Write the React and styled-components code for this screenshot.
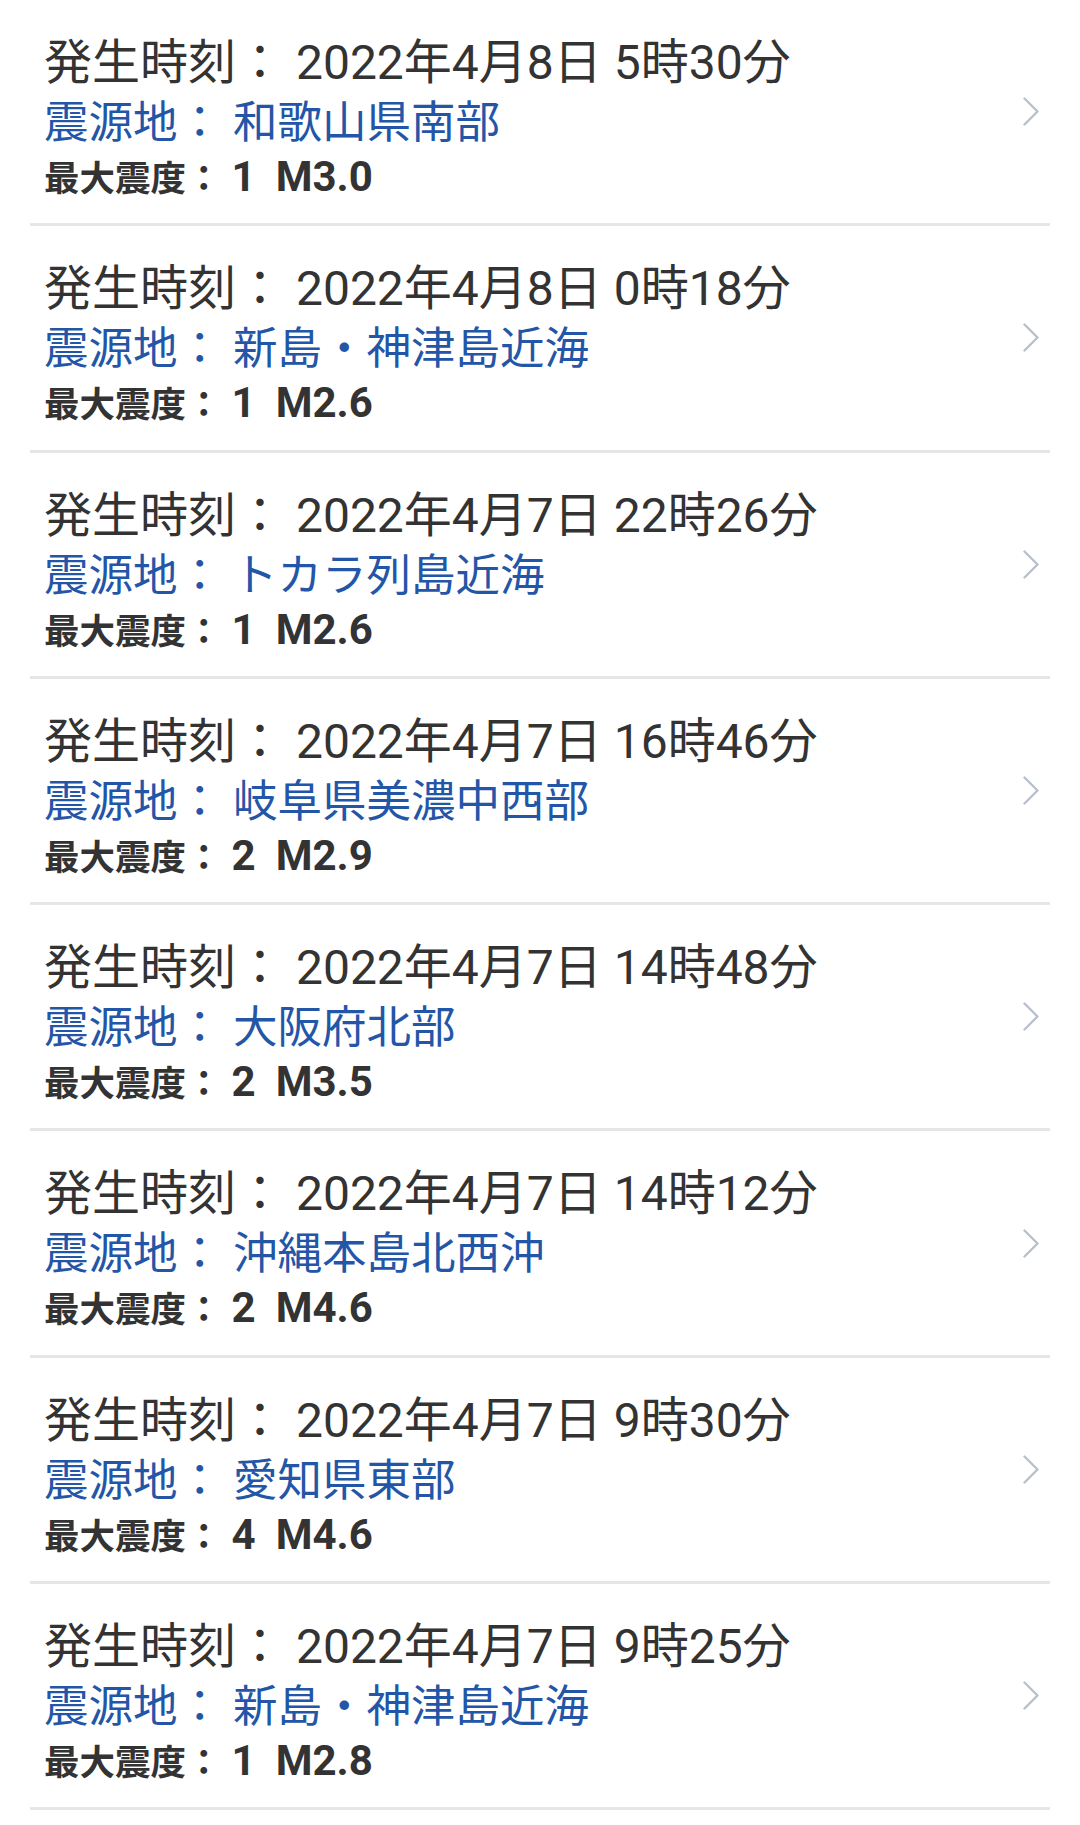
import React from "react";
import styled, { createGlobalStyle } from "styled-components";

const GlobalStyle = createGlobalStyle`
  body {
    margin: 0;
    background: #fff;
    font-family: Roboto, "Noto Sans CJK JP", sans-serif;
  }
`;

const List = styled.ul`
  list-style: none;
  margin: 0;
  padding: 0 30px;
`;

const Row = styled.li`
  display: flex;
  align-items: center;
  padding: 0 11px 0 14px;
  border-bottom: 3px solid #e6e6e6;
  cursor: pointer;
`;

const Info = styled.div`
  flex: 1;
  min-width: 0;
  padding: 32px 0 17.3px;
`;

const Time = styled.div`
  font-size: 48px;
  line-height: 62px;
  color: #333;
  white-space: nowrap;
`;

const Place = styled.div`
  font-size: 44.5px;
  line-height: 58px;
  color: #2456a8;
  white-space: nowrap;
`;

const Scale = styled.div`
  height: 54px;
  font-size: 35.5px;
  line-height: 54px;
  font-weight: bold;
  color: #333;
  white-space: nowrap;
`;

const Num = styled.span`
  font-size: 42px;
  line-height: 1;
  margin-left: ${(p) => p.gap}px;
`;

const Chevron = () => (
  <svg width="16" height="29" viewBox="0 0 16 29" fill="none">
    <polyline
      points="1.5,1.5 14.5,14.5 1.5,27.5"
      stroke="#b8c0cb"
      strokeWidth="2.4"
      strokeLinecap="round"
      strokeLinejoin="round"
    />
  </svg>
);

const quakes = [
  { time: "2022年4月8日 5時30分", place: "和歌山県南部", shindo: "1", mag: "M3.0" },
  { time: "2022年4月8日 0時18分", place: "新島・神津島近海", shindo: "1", mag: "M2.6" },
  { time: "2022年4月7日 22時26分", place: "トカラ列島近海", shindo: "1", mag: "M2.6" },
  { time: "2022年4月7日 16時46分", place: "岐阜県美濃中西部", shindo: "2", mag: "M2.9" },
  { time: "2022年4月7日 14時48分", place: "大阪府北部", shindo: "2", mag: "M3.5" },
  { time: "2022年4月7日 14時12分", place: "沖縄本島北西沖", shindo: "2", mag: "M4.6" },
  { time: "2022年4月7日 9時30分", place: "愛知県東部", shindo: "4", mag: "M4.6" },
  { time: "2022年4月7日 9時25分", place: "新島・神津島近海", shindo: "1", mag: "M2.8" },
];

const App = () => {
  return (
    <>
      <GlobalStyle />
      <List>
        {quakes.map((q, i) => (
          <Row key={i}>
            <Info>
              <Time>発生時刻： {q.time}</Time>
              <Place>震源地： {q.place}</Place>
              <Scale>
                最大震度：
                <Num gap={10}>{q.shindo}</Num>
                <Num gap={20}>{q.mag}</Num>
              </Scale>
            </Info>
            <Chevron />
          </Row>
        ))}
      </List>
    </>
  );
};

export default App;
